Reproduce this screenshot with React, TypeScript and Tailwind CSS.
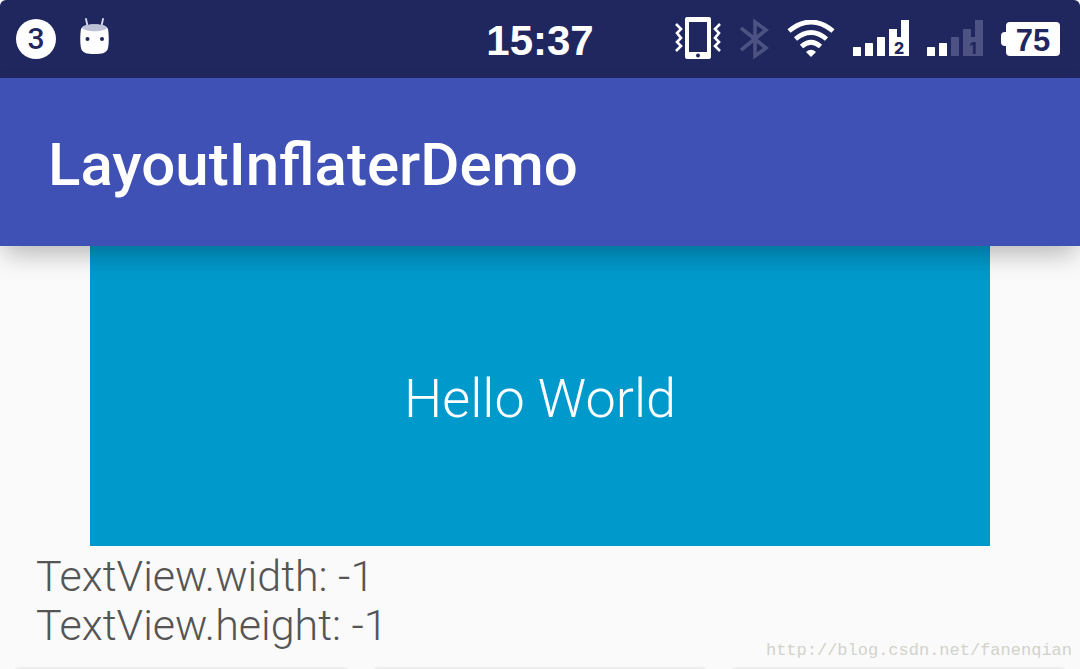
const BugdroidIcon = () => (
  <svg width="32" height="42" viewBox="0 0 32 42" aria-hidden="true">
    <path d="M9.500 8 8 1M23.500 8 25 1" stroke="#dcdde9" strokeWidth="1.800" strokeLinecap="round" />
    <path
      d="M3 11C5 5 28 5 30 11c1 6 1 14 0 19-1 5-6 6-13.500 6S4 35 3 30C2 25 2 17 3 11z"
      fill="#fff"
    />
    <path d="M4 9.500C5 5 28 5 29 9.500c-1 5-24 5-25 0z" fill="#bfc1d6" />
    <circle cx="9.500" cy="21" r="2" fill="#1f275e" />
    <circle cx="24" cy="21" r="2" fill="#1f275e" />
  </svg>
);

const VibrateIcon = () => (
  <svg width="48" height="44" viewBox="0 0 48 44" fill="none" aria-hidden="true">
    <rect x="12" y="0" width="26" height="42" rx="2" fill="#fff" />
    <path d="M16 5h18v30H16z" fill="#1f275e" />
    <circle cx="25" cy="38.500" r="2" fill="#1f275e" />
    <path
      d="m3 7 5 5-4 4 4 5-4 4 4 4-5 5M47 7l-5 5 4 4-4 5 4 4-4 4 5 5"
      stroke="#fff"
      strokeWidth="2.600"
    />
  </svg>
);

const BluetoothIcon = () => (
  <svg width="30" height="42" viewBox="0 0 30 42" fill="none" aria-hidden="true">
    <path
      d="m2 10 25 20-11 8V4l11 8L2 32"
      stroke="#4c5382"
      strokeWidth="3.600"
    />
  </svg>
);

const WifiIcon = () => (
  <svg width="48" height="38" viewBox="0 0 48 38" fill="none" aria-hidden="true">
    <path
      d="M2 11Q24-7 46 11M8.500 19Q24 6 39.500 19M14.500 26.500Q24 18 33.500 26.500"
      stroke="#fff"
      strokeWidth="4.800"
    />
    <path d="M24 37l-5-5q5-4.500 10 0z" fill="#fff" />
  </svg>
);

type SignalProps = {
  sim: string;
  strength: number;
};

const SignalIcon = ({ sim, strength }: SignalProps) => {
  const color = (bar: number) => (bar <= strength ? "#fff" : "#4c5382");

  return (
    <svg width="56" height="38" viewBox="0 0 56 38" role="img" aria-label={`SIM ${sim}`}>
      <rect x="0" y="27" width="8" height="9" rx="0.500" fill={color(1)} />
      <rect x="12" y="23" width="8" height="13" rx="0.500" fill={color(2)} />
      <rect x="24" y="17" width="8" height="19" rx="0.500" fill={color(3)} />
      <path d="M36 9h8v8h4V0h8v36H36z" fill={color(4)} />
      <text
        x="46"
        y="34"
        textAnchor="middle"
        fill="#1f275e"
        className="font-['Inter',sans-serif] text-[16px] font-extrabold"
      >
        {sim}
      </text>
    </svg>
  );
};

const Battery = ({ level }: { level: number }) => (
  <div className="flex items-center">
    <div className="h-[14px] w-[5px] rounded-l-sm bg-white" />
    <div className="flex h-[34px] w-[54px] items-center justify-center rounded bg-white pt-1 text-[31px] leading-none font-bold text-[#1f275e]">
      {level}
    </div>
  </div>
);

const StatusBar = () => (
  <div className="grid h-[78px] grid-cols-[1fr_auto_1fr] items-center rounded-t-md bg-[#1f275e] px-4 font-['Liberation_Sans',sans-serif] text-white">
    <div className="flex items-center gap-[22px]">
      <div className="flex size-10 items-center justify-center rounded-full bg-white font-['Roboto',sans-serif] text-[30px] leading-none font-medium text-[#1f275e]">
        3
      </div>
      <BugdroidIcon />
    </div>
    <time className="pt-1 text-[42px] leading-none font-bold">15:37</time>
    <div className="flex items-center justify-end gap-[18px] pr-1 pb-px">
      <VibrateIcon />
      <BluetoothIcon />
      <WifiIcon />
      <SignalIcon sim="2" strength={4} />
      <SignalIcon sim="1" strength={2} />
      <Battery level={75} />
    </div>
  </div>
);

const App = () => {
  return (
    <div className="relative overflow-hidden bg-[#fafafa]">
      <div className="bg-white">
        <StatusBar />
      </div>
      <header className="relative flex h-[168px] items-center bg-[#3f51b5] px-12 pt-[6px] shadow-[0_12px_24px_-4px_rgba(0,0,0,0.27)]">
        <h1 className="font-['Roboto',sans-serif] text-[60px] leading-none font-medium text-white">
          LayoutInflaterDemo
        </h1>
      </header>
      <main className="font-['Roboto',sans-serif] font-light">
        <div className="mx-[90px] flex h-[300px] items-center justify-center bg-[#0099cc] pt-1 text-[54px] text-white">
          Hello World
        </div>
        <div className="px-9 pt-[6px] text-[43px] leading-[49px] text-[#555]">
          <p>TextView.width: -1</p>
          <p>TextView.height: -1</p>
        </div>
        <div className="mt-[17px] grid h-2 grid-cols-3 gap-5 px-3">
          <div className="rounded-t-lg bg-[#ededed]" />
          <div className="rounded-t-lg bg-[#ededed]" />
          <div className="rounded-t-lg bg-[#ededed]" />
        </div>
      </main>
      <a
        href="http://blog.csdn.net/fanenqian"
        className="absolute right-2 bottom-3 font-['Liberation_Mono',monospace] text-[17px] text-[#d2d2ca]"
      >
        http://blog.csdn.net/fanenqian
      </a>
    </div>
  );
};

export default App;
